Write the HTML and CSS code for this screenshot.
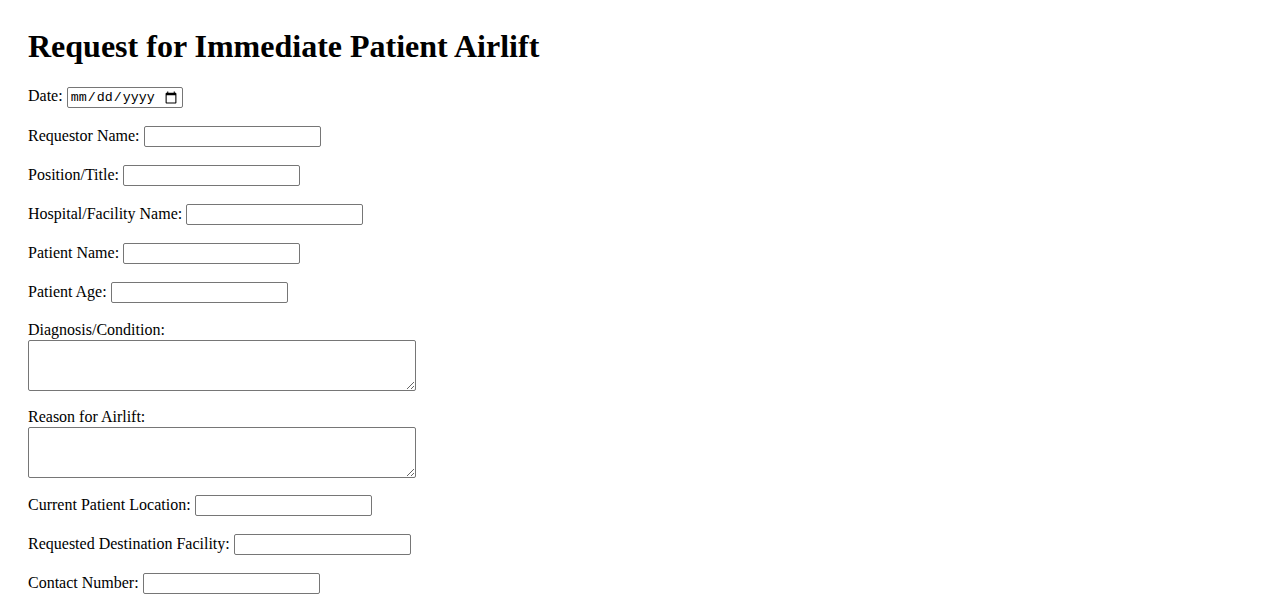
FILE: index.html
```
<!DOCTYPE html>
<html lang="en">
<head>
<meta charset="utf-8">
<title>Request for Immediate Patient Airlift</title>
<link rel="stylesheet" href="styles.css">
</head>
<body>
<div class="page">
  <h1 class="title">Request for Immediate Patient Airlift</h1>
  <form class="form">
    <div class="field"><label for="date">Date:</label> <input class="date-input" type="date" id="date"></div>
    <div class="field"><label for="rname">Requestor Name:</label> <input class="text-input" type="text" id="rname"></div>
    <div class="field"><label for="pos">Position/Title:</label> <input class="text-input" type="text" id="pos"></div>
    <div class="field"><label for="hosp">Hospital/Facility Name:</label> <input class="text-input" type="text" id="hosp"></div>
    <div class="field"><label for="pname">Patient Name:</label> <input class="text-input" type="text" id="pname"></div>
    <div class="field"><label for="page">Patient Age:</label> <input class="text-input" type="text" id="page"></div>
    <div class="field-stack"><label class="stack-label" for="diag">Diagnosis/Condition:</label><textarea class="area" id="diag"></textarea></div>
    <div class="field-stack"><label class="stack-label" for="reason">Reason for Airlift:</label><textarea class="area" id="reason"></textarea></div>
    <div class="field"><label for="loc">Current Patient Location:</label> <input class="text-input" type="text" id="loc"></div>
    <div class="field"><label for="dest">Requested Destination Facility:</label> <input class="text-input" type="text" id="dest"></div>
    <div class="field"><label for="phone">Contact Number:</label> <input class="text-input" type="text" id="phone"></div>
  </form>
</div>
</body>
</html>
```
FILE: styles.css
```
html, body {
  background: #ffffff;
}
body {
  margin: 8px;
  font-family: "Liberation Serif", "Times New Roman", serif;
  font-size: 16px;
  color: #000000;
}
.page {
  padding: 20px;
}
.title {
  font-size: 32px;
  font-weight: bold;
  margin: 0 0 19px;
  line-height: 37px;
}
.field {
  margin: 0 0 16px;
  line-height: 23px;
}
.field-stack {
  margin: 0 0 15px;
}
.stack-label {
  display: block;
  line-height: 21px;
}
.text-input,
.date-input,
.area {
  font-family: "Liberation Sans", Arial, sans-serif;
  font-size: 13.33px;
  border: 1px solid #767676;
  border-radius: 2px;
  box-sizing: border-box;
  background: #ffffff;
  color: #000000;
}
.text-input {
  width: 177px;
  height: 21px;
  padding: 1px 2px;
}
.date-input {
  width: 116px;
  height: 21px;
  padding: 1px 2px;
  font-family: "Liberation Mono", monospace;
}
.area {
  display: block;
  width: 388px;
  height: 51px;
  padding: 2px;
  margin: 0;
}
```
